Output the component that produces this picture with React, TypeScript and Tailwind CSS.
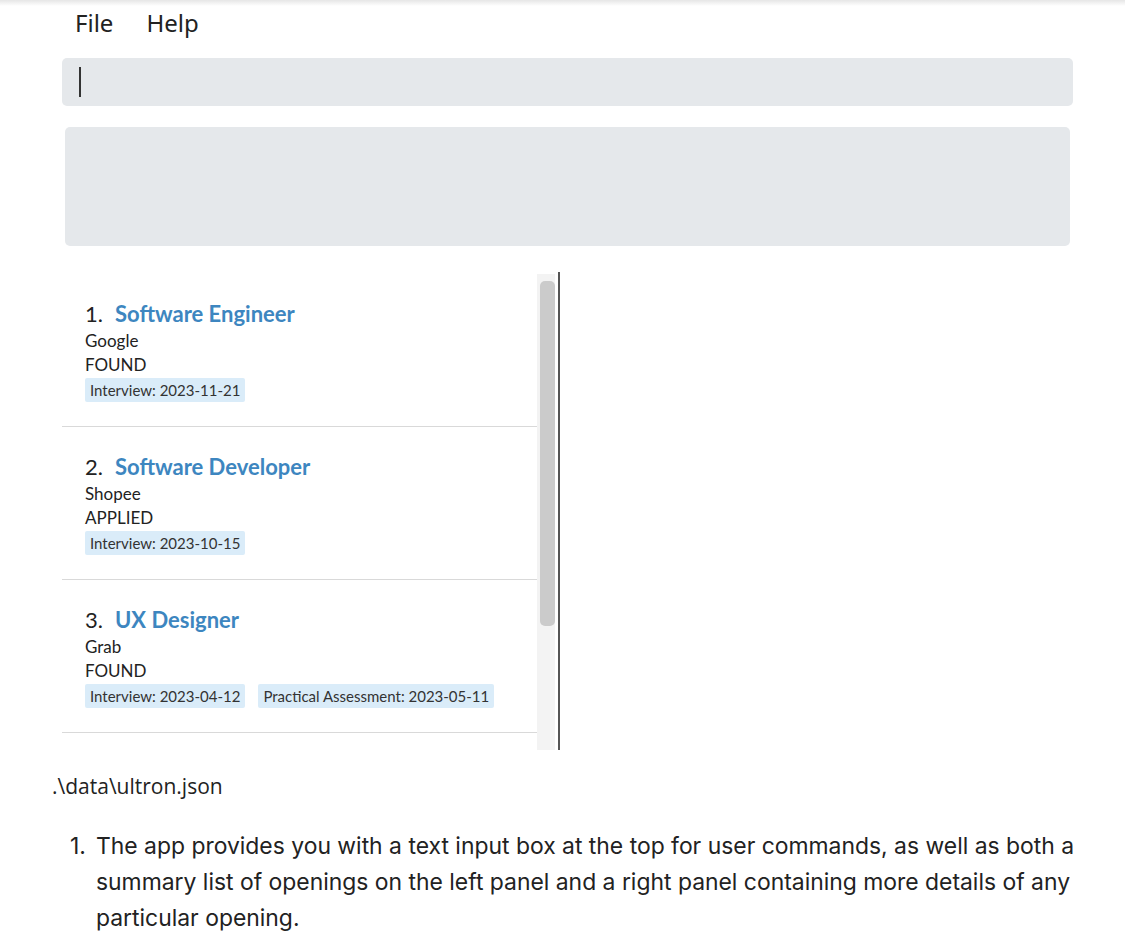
import React from "react";

type Item = { n: number; title: string; company: string; status: string; chips: string[] };

const items: Item[] = [
  { n: 1, title: "Software Engineer", company: "Google", status: "FOUND", chips: ["Interview: 2023-11-21"] },
  { n: 2, title: "Software Developer", company: "Shopee", status: "APPLIED", chips: ["Interview: 2023-10-15"] },
  { n: 3, title: "UX Designer", company: "Grab", status: "FOUND", chips: ["Interview: 2023-04-12", "Practical Assessment: 2023-05-11"] },
];

export default function App() {
  return (
    <div className="w-[1125px] h-[949px] overflow-hidden bg-white relative">
      <div className="h-[6px] bg-gradient-to-b from-[#e6e6e6] to-white" />
      <div className="flex gap-[33px] pl-[75px] h-[34px] items-center text-[24px] text-[#222] font-['Noto_Sans',sans-serif]">
        <span>File</span>
        <span>Help</span>
      </div>
      <div className="ml-[62px] mt-[18px] w-[1011px] h-[48px] rounded-[5px] bg-[#e5e8eb] flex items-center pl-[17px]">
        <div className="w-[2px] h-[30px] bg-[#333]" />
      </div>
      <div className="ml-[65px] mt-[21px] w-[1005px] h-[119px] rounded-[5px] bg-[#e5e8eb]" />
      <div className="ml-[62px] mt-[28px] flex h-[476px]">
        <div className="w-[475px] flex flex-col font-['Source_Sans_Pro','Lato',sans-serif]">
          {items.map((it) => (
            <div key={it.n} className="pt-[23px] pl-[23px] border-b border-[#d9d9d9] h-[153px] box-border">
              <div className="h-[32px] flex items-center text-[22px]">
                <span className="text-[#222] w-[30px]">{it.n}.</span>
                <span className="text-[#3d86c0] font-bold">{it.title}</span>
              </div>
              <div className="h-[24px] leading-[24px] text-[17px] text-[#222]">{it.company}</div>
              <div className="h-[24px] leading-[24px] text-[17px] text-[#222]">{it.status}</div>
              <div className="mt-[1px] flex gap-[13px]">
                {it.chips.map((c) => (
                  <span key={c} className="h-[24px] leading-[24px] px-[5px] rounded-[2px] bg-[#daecf9] text-[15px] text-[#333]">{c}</span>
                ))}
              </div>
            </div>
          ))}
        </div>
        <div className="w-[18px] bg-[#f3f3f3] relative">
          <div className="absolute left-[3px] top-[7px] w-[15px] h-[345px] rounded-[5px] bg-[#cbcbcb]" />
        </div>
        <div className="w-[3px]" />
        <div className="w-[2px] bg-[#555] -mt-[2px]" />
      </div>
      <div className="ml-[52px] mt-[22px] text-[21px] text-[#222] font-['Open_Sans',sans-serif] leading-[28px]">.\data\ultron.json</div>
      <ol className="mt-[28px] ml-[70px] w-[1020px] text-[22.9px] leading-[36px] text-[#222] font-['Inter',sans-serif]">
        <li className="flex">
          <span className="w-[26px] shrink-0">1.</span>
          <span>The app provides you with a text input box at the top for user commands, as well as both a summary list of openings on the left panel and a right panel containing more details of any particular opening.</span>
        </li>
      </ol>
    </div>
  );
}
